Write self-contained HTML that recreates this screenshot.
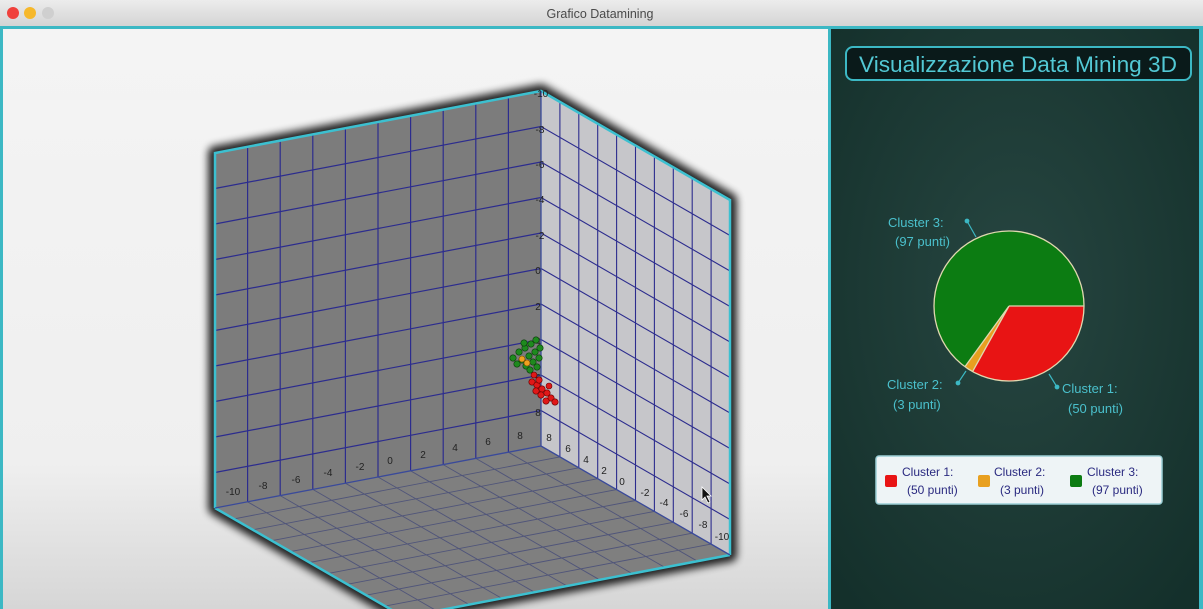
<!DOCTYPE html>
<html><head><meta charset="utf-8"><style>
html,body{margin:0;padding:0;width:1203px;height:609px;overflow:hidden;background:#f3f3f3;font-family:"Liberation Sans",sans-serif}
</style></head><body>
<svg width="1203" height="609" viewBox="0 0 1203 609" xmlns="http://www.w3.org/2000/svg" style="position:absolute;left:0;top:0">
<defs>
<linearGradient id="tb" x1="0" y1="0" x2="0" y2="1"><stop offset="0" stop-color="#ececec"/><stop offset="1" stop-color="#d4d4d4"/></linearGradient>
<linearGradient id="lp" x1="0" y1="0" x2="0" y2="1"><stop offset="0" stop-color="#f4f4f4"/><stop offset="0.75" stop-color="#efefef"/><stop offset="1" stop-color="#d6d6d6"/></linearGradient>
<radialGradient id="rp" cx="0.5" cy="0.45" r="0.7"><stop offset="0" stop-color="#274641"/><stop offset="1" stop-color="#14302b"/></radialGradient>
<filter id="sh" x="-20%" y="-20%" width="140%" height="140%"><feGaussianBlur stdDeviation="4"/></filter>
</defs>
<rect x="0" y="0" width="1203" height="26" fill="url(#tb)"/>
<circle cx="13" cy="13" r="6" fill="#f0413c"/><circle cx="30" cy="13" r="6" fill="#f6b82b"/><circle cx="48" cy="13" r="6" fill="#cfcfcf"/>
<text x="600" y="18" font-size="12.5" fill="#4a4a4a" text-anchor="middle">Grafico Datamining</text>
<rect x="0" y="26" width="1203" height="583" fill="#3cb8c4"/>
<rect x="3" y="29" width="825" height="580" fill="url(#lp)"/>
<rect x="831" y="29" width="368" height="580" fill="url(#rp)"/>
<!-- shadow -->
<polygon points="215,153 541,91 730,200 730,555 404,617 215,508" fill="#000" stroke="#000" stroke-width="14" stroke-linejoin="round" filter="url(#sh)" opacity="0.85"/>
<!-- walls -->
<g transform="matrix(326,-62,0,355,215,153)">
<rect width="1" height="1" fill="#7c7c7c"/>
<path vector-effect="non-scaling-stroke" stroke="#2c2c8e" stroke-width="1.2" fill="none" d="M.1 0V1M.2 0V1M.3 0V1M.4 0V1M.5 0V1M.6 0V1M.7 0V1M.8 0V1M.9 0V1M0 .1H1M0 .2H1M0 .3H1M0 .4H1M0 .5H1M0 .6H1M0 .7H1M0 .8H1M0 .9H1"/>
</g>
<g transform="matrix(189,109,0,355,541,91)">
<rect width="1" height="1" fill="#c6c6ca"/>
<path vector-effect="non-scaling-stroke" stroke="#2c2c8e" stroke-width="1.1" fill="none" d="M.1 0V1M.2 0V1M.3 0V1M.4 0V1M.5 0V1M.6 0V1M.7 0V1M.8 0V1M.9 0V1M0 .1H1M0 .2H1M0 .3H1M0 .4H1M0 .5H1M0 .6H1M0 .7H1M0 .8H1M0 .9H1"/>
</g>
<g transform="matrix(189,109,-326,62,541,446)">
<rect width="1" height="1" fill="#7f7f7f"/>
<path vector-effect="non-scaling-stroke" stroke="#50557a" stroke-width="0.9" fill="none" d="M.1 0V1M.2 0V1M.3 0V1M.4 0V1M.5 0V1M.6 0V1M.7 0V1M.8 0V1M.9 0V1M0 .1H1M0 .2H1M0 .3H1M0 .4H1M0 .5H1M0 .6H1M0 .7H1M0 .8H1M0 .9H1"/>
</g>
<!-- cyan edges -->
<g stroke="#3cc0d0" stroke-width="2.5" fill="none">
<path d="M215,508 L215,153 L541,91 L730,200 L730,555"/>
<path d="M215,508 L404,617 L730,555"/>
</g>
<path d="M541,91 V446 L215,508 M541,446 L730,555" stroke="#3a4a9a" stroke-width="1.3" fill="none"/>
<!-- labels -->
<g font-size="10" fill="#222" text-anchor="middle">
<text x="233" y="495">-10</text><text x="263" y="489">-8</text><text x="296" y="483">-6</text><text x="328" y="476">-4</text><text x="360" y="470">-2</text><text x="390" y="464">0</text><text x="423" y="458">2</text><text x="455" y="451">4</text><text x="488" y="445">6</text><text x="520" y="439">8</text>
<text x="549" y="441">8</text><text x="568" y="452">6</text><text x="586" y="463">4</text><text x="604" y="474">2</text><text x="622" y="485">0</text><text x="645" y="496">-2</text><text x="664" y="506">-4</text><text x="684" y="517">-6</text><text x="703" y="528">-8</text><text x="722" y="540">-10</text>
<text x="541" y="97">-10</text><text x="540" y="133">-8</text><text x="540" y="168">-6</text><text x="540" y="203">-4</text><text x="540" y="239">-2</text><text x="538" y="274">0</text><text x="538" y="310">2</text><text x="538" y="345">4</text><text x="538" y="381">6</text><text x="538" y="416">8</text>
</g>
<!-- points -->
<g stroke="#0c3a0c" stroke-width="0.6" fill="#1e8a1e">
<circle cx="513" cy="358" r="3.2"/><circle cx="519" cy="352" r="3.2"/><circle cx="525" cy="348" r="3.2"/><circle cx="531" cy="344" r="3.2"/><circle cx="536" cy="340" r="3.2"/><circle cx="540" cy="348" r="3.2"/><circle cx="535" cy="352" r="3.2"/><circle cx="529" cy="356" r="3.2"/><circle cx="522" cy="360" r="3.2"/><circle cx="517" cy="364" r="3.2"/><circle cx="526" cy="366" r="3.2"/><circle cx="533" cy="362" r="3.2"/><circle cx="539" cy="358" r="3.2"/><circle cx="530" cy="370" r="3.2"/><circle cx="537" cy="367" r="3.2"/><circle cx="524" cy="343" r="3.2"/>
</g>
<g stroke="#7a5200" stroke-width="0.6" fill="#f0a020"><circle cx="522" cy="359" r="3"/><circle cx="527" cy="363" r="3"/></g>
<g stroke="#600" stroke-width="0.6" fill="#e01818">
<circle cx="534" cy="375" r="3"/><circle cx="532" cy="382" r="3.2"/><circle cx="537" cy="385" r="3.2"/><circle cx="542" cy="389" r="3.2"/><circle cx="536" cy="391" r="3.2"/><circle cx="541" cy="395" r="3.2"/><circle cx="547" cy="393" r="3.2"/><circle cx="551" cy="398" r="3.2"/><circle cx="546" cy="401" r="3.2"/><circle cx="555" cy="402" r="3.2"/><circle cx="539" cy="380" r="3.2"/><circle cx="549" cy="386" r="3"/>
</g>
<!-- cursor -->
<path d="M702,487 L702,500 L705,497 L708,503 L710,502 L707,496 L711,496 Z" fill="#111" stroke="#fff" stroke-width="0.8"/>
<!-- right panel -->
<rect x="846" y="47" width="345" height="33" rx="7" fill="#0a1a1a" stroke="#3cb8c4" stroke-width="2"/>
<text x="1018" y="72" font-size="22" fill="#52c8d4" text-anchor="middle" textLength="318" lengthAdjust="spacingAndGlyphs">Visualizzazione Data Mining 3D</text>
<!-- pie -->
<path d="M1009,306 L1084,306 A75,75 0 0 1 972.6,371.6 Z" fill="#e81414"/>
<path d="M1009,306 L972.6,371.6 A75,75 0 0 1 964.9,366.7 Z" fill="#e8a020"/>
<path d="M1009,306 L964.9,366.7 A75,75 0 1 1 1084,306 Z" fill="#0c7c12"/>
<circle cx="1009" cy="306" r="75" fill="none" stroke="#e0d8b0" stroke-width="1.3"/>
<path d="M1009,306 L1084,306 M1009,306 L972.6,371.6 M1009,306 L964.9,366.7" stroke="#e0d8b0" stroke-width="1.3"/>
<g stroke="#3cb8c4" stroke-width="1.2" fill="#3cb8c4">
<line x1="967" y1="221" x2="976" y2="237"/><circle cx="967" cy="221" r="1.8"/>
<line x1="958" y1="383" x2="966" y2="371"/><circle cx="958" cy="383" r="1.8"/>
<line x1="1057" y1="387" x2="1049" y2="374"/><circle cx="1057" cy="387" r="1.8"/>
</g>
<g font-size="13" fill="#4ac0cc">
<text x="888" y="227">Cluster 3:</text><text x="895" y="246">(97 punti)</text>
<text x="887" y="389">Cluster 2:</text><text x="893" y="409">(3 punti)</text>
<text x="1062" y="393">Cluster 1:</text><text x="1068" y="413">(50 punti)</text>
</g>
<!-- legend -->
<rect x="876" y="456" width="286" height="48" rx="3" fill="#eef4f6" stroke="#9ccfd6" stroke-width="1.5"/>
<rect x="885" y="475" width="12" height="12" rx="2" fill="#e81414"/>
<rect x="978" y="475" width="12" height="12" rx="2" fill="#e8a020"/>
<rect x="1070" y="475" width="12" height="12" rx="2" fill="#0c7c12"/>
<g font-size="12" fill="#2a2a80">
<text x="902" y="476">Cluster 1:</text><text x="907" y="494">(50 punti)</text>
<text x="994" y="476">Cluster 2:</text><text x="1000" y="494">(3 punti)</text>
<text x="1087" y="476">Cluster 3:</text><text x="1092" y="494">(97 punti)</text>
</g>
</svg>
</body></html>
